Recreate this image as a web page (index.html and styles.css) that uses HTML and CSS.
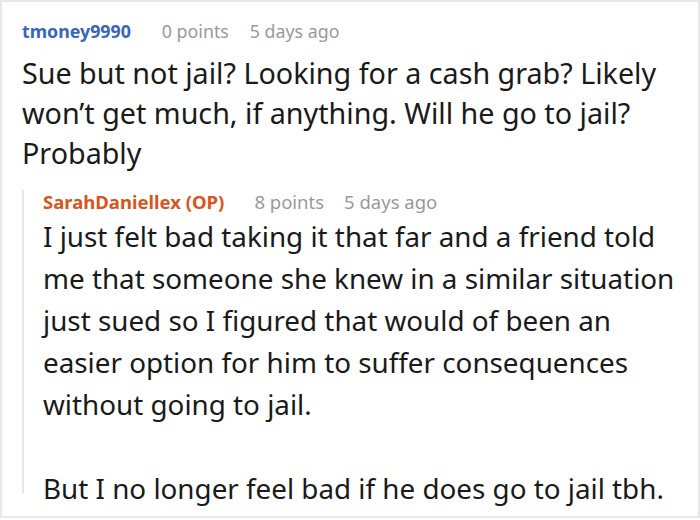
FILE: index.html
```html
<!DOCTYPE html>
<html>
<head>
<meta charset="utf-8">
<link rel="stylesheet" href="styles.css">
</head>
<body>
<div class="frame">
  <div class="comment">
    <div class="meta">
      <span class="author">tmoney9990</span>
      <span class="info">0 points</span>
      <span class="info">5 days ago</span>
    </div>
    <div class="body">Sue but not jail? Looking for a cash grab? Likely won’t get much, if anything. Will he go to jail? Probably</div>
    <div class="reply">
      <div class="meta reply-meta">
        <span class="author op">SarahDaniellex (OP)</span>
        <span class="info">8 points</span>
        <span class="info">5 days ago</span>
      </div>
      <div class="body reply-body">
        <p>I just felt bad taking it that far and a friend told me that someone she knew in a similar situation just sued so I figured that would of been an easier option for him to suffer consequences without going to jail.</p>
        <p>But I no longer feel bad if he does go to jail tbh.</p>
      </div>
    </div>
  </div>
</div>
</body>
</html>
```
FILE: styles.css
```css
html, body {
  margin: 0;
  padding: 0;
  background: #ffffff;
}
.frame {
  box-sizing: border-box;
  width: 700px;
  height: 518px;
  border: 2px solid #e8e8e8;
  background: #fff;
  overflow: hidden;
  font-family: "Noto Sans", "Open Sans", sans-serif;
}
.comment {
  padding: 17px 16px 0 20px;
}
.meta {
  display: flex;
  gap: 21px;
  font-size: 17.8px;
  line-height: 24px;
}
.author {
  color: #3867b8;
  font-weight: 700;
  margin-right: 10px;
}
.author.op {
  color: #d55620;
}
.info {
  color: #999999;
}
.body {
  color: #1a1a1a;
  font-size: 28.7px;
  line-height: 40px;
  margin-top: 10px;
}
.reply {
  margin-top: 25px;
  height: 303px;
  border-left: 2px solid #e6e6e6;
  padding-left: 19px;
}
.reply-meta {
  margin-top: -8px;
  font-size: 18.5px;
  gap: 20px;
}
.reply-body {
  font-size: 27.8px;
  line-height: 42px;
  margin-top: 1px;
}
.reply-body p {
  margin: 0;
}
.reply-body p + p {
  margin-top: 42px;
}
```
